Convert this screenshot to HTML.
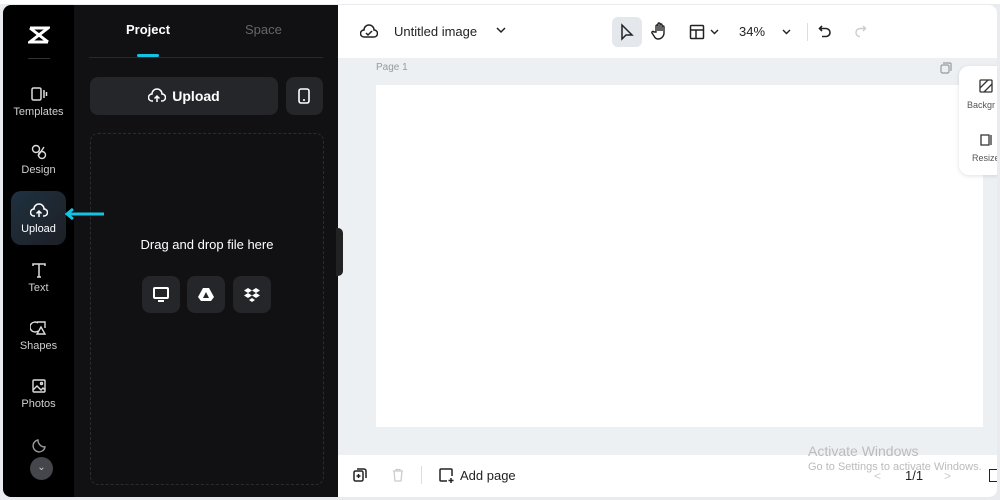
<!DOCTYPE html>
<html><head><style>
*{margin:0;padding:0;box-sizing:border-box}
body{width:1000px;height:500px;background:#e9ebee;font-family:"Liberation Sans",sans-serif;position:relative;overflow:hidden}
.abs{position:absolute}
.side{left:3px;top:5px;width:71px;height:492px;background:#000;border-radius:8px 0 0 8px}
.panel{left:74px;top:5px;width:264px;height:492px;background:#111113}
.nav{position:absolute;left:0;width:71px;text-align:center;color:#d0d0d0;font-size:11px}
.nav svg{display:block;margin:0 auto 3px}
.main{left:338px;top:5px;width:659px;height:492px;background:#fff;border-radius:0 8px 8px 0;overflow:hidden}
.btn{background:#25262a;border-radius:8px}
.chev{font-size:13px;color:#222}
</style></head><body>
<div class="abs" style="left:0;top:0;width:1000px;height:4px;background:#fff"></div>
<div class="abs side">
 <svg class="abs" style="left:25px;top:20px" width="22" height="20" viewBox="0 0 22 20"><path d="M2 3h18L2 17h18M2 3l18 14" stroke="#fff" stroke-width="3" fill="none"/></svg>
 <div class="abs" style="left:25px;top:53px;width:22px;height:1px;background:#333"></div>
 <div class="nav" style="top:80px"><svg width="18" height="18" viewBox="0 0 18 18" fill="none" stroke="#ddd" stroke-width="1.5"><rect x="2" y="3" width="9" height="12" rx="1.5"/><path d="M14 5v8M16.5 7v4"/></svg>Templates</div>
 <div class="nav" style="top:138px"><svg width="18" height="18" viewBox="0 0 18 18" fill="none" stroke="#ddd" stroke-width="1.4"><circle cx="6" cy="6" r="3.5"/><circle cx="12" cy="12" r="3.5"/><path d="M8 13l6-9"/></svg>Design</div>
 <div class="abs" style="left:8px;top:186px;width:55px;height:54px;border-radius:10px;background:linear-gradient(135deg,#1f3140,#1d1f25)"></div>
 <div class="nav" style="top:197px;color:#fff"><svg width="18" height="18" viewBox="0 0 18 18" fill="none" stroke="#fff" stroke-width="1.5"><path d="M5 14H4a3.5 3.5 0 0 1 0-7 5 5 0 0 1 10 0 3.5 3.5 0 0 1 0 7h-1M9 15V9M6.5 11.5 9 9l2.5 2.5"/></svg>Upload</div>
 <div class="nav" style="top:256px"><svg width="18" height="18" viewBox="0 0 18 18" fill="none" stroke="#ddd" stroke-width="1.5"><path d="M3 5V3h12v2M9 3v13M7 16h4"/></svg>Text</div>
 <div class="nav" style="top:314px"><svg width="18" height="18" viewBox="0 0 18 18" fill="none" stroke="#ddd" stroke-width="1.4"><path d="M8 4a5 5 0 1 0 0 8M7 3h8v6M11 8l-4 7h8z"/></svg>Shapes</div>
 <div class="nav" style="top:372px"><svg width="18" height="18" viewBox="0 0 18 18" fill="none" stroke="#ddd" stroke-width="1.4"><rect x="3" y="3" width="12" height="12" rx="1"/><path d="M3 13l4-4 4 4 2-2 2 2"/><circle cx="11.5" cy="6.5" r="1"/></svg>Photos</div>
 <svg class="abs" style="left:27px;top:432px" width="18" height="18" viewBox="0 0 18 18" fill="none" stroke="#999" stroke-width="1.4"><path d="M15 10a6 6 0 1 1-7-7c0 4 3 7 7 7z"/></svg>
 <div class="abs" style="left:27px;top:452px;width:23px;height:23px;border-radius:50%;background:#45464b;color:#ccc;font-size:10px;text-align:center;line-height:22px">&#8964;</div>
</div>
<div class="abs panel">
 <div class="abs" style="left:52px;top:17px;color:#fff;font-weight:bold;font-size:13px">Project</div>
 <div class="abs" style="left:171px;top:17px;color:#666;font-size:13px">Space</div>
 <div class="abs" style="left:63px;top:49px;width:22px;height:3px;background:#13c3e3;border-radius:2px"></div>
 <div class="abs" style="left:15px;top:52px;width:234px;height:1px;background:#2a2a2e"></div>
 <div class="abs btn" style="left:16px;top:72px;width:188px;height:38px;color:#fff;font-size:14px;font-weight:bold;line-height:38px;text-align:center"><svg style="vertical-align:-3px;margin-right:6px" width="18" height="16" viewBox="0 0 18 16" fill="none" stroke="#fff" stroke-width="1.5"><path d="M5 13H4a3.5 3.5 0 0 1 0-7 5 5 0 0 1 10 0 3.5 3.5 0 0 1 0 7h-1M9 14V8M6.5 10.5 9 8l2.5 2.5"/></svg>Upload</div>
 <div class="abs btn" style="left:212px;top:72px;width:37px;height:38px"><svg class="abs" style="left:12px;top:11px" width="12" height="16" fill="none" stroke="#fff" stroke-width="1.6"><rect x="1" y="1" width="10" height="14" rx="2"/><path d="M5 12h2"/></svg></div>
 <div class="abs" style="left:16px;top:128px;width:234px;height:352px;border:1px dashed #2c2c30;border-radius:8px"></div>
 <div class="abs" style="left:16px;top:232px;width:234px;text-align:center;color:#fff;font-size:13px">Drag and drop file here</div>
 <div class="abs btn" style="left:68px;top:271px;width:38px;height:37px"><svg class="abs" style="left:11px;top:11px" width="16" height="15"><rect x="1" y="1" width="14" height="10" rx="1" fill="none" stroke="#fff" stroke-width="2"/><path d="M5 14h6" stroke="#fff" stroke-width="2"/></svg></div>
 <div class="abs btn" style="left:113px;top:271px;width:38px;height:37px"><svg class="abs" style="left:11px;top:11px" width="16" height="14"><path d="M5 1h6l5 9-3 4H3l-3-4z" fill="#fff"/><path d="M8 5l-3 6h6z" fill="#25262a"/></svg></div>
 <div class="abs btn" style="left:159px;top:271px;width:38px;height:37px"><svg class="abs" style="left:11px;top:11px" width="16" height="15" fill="#fff"><path d="M4 1l4 2.5-4 2.5-4-2.5zM12 1l4 2.5-4 2.5-4-2.5zM4 6l4 2.5-4 2.5-4-2.5zM12 6l4 2.5-4 2.5-4-2.5zM8 11l3 2-3 2-3-2z"/></svg></div>
</div>
<svg class="abs" style="left:58px;top:207px" width="48" height="14"><path d="M46 7H9M15 2 9 7l6 5" stroke="#13c3e3" stroke-width="3" fill="none"/></svg>
<div class="abs main">
 <svg class="abs" style="left:22px;top:18px" width="18" height="16" fill="none" stroke="#222" stroke-width="1.5"><path d="M5 14H4a3.5 3.5 0 0 1 0-7 5 5 0 0 1 10 0 3.5 3.5 0 0 1 0 7z"/><path d="M6 10l2 2 4-4"/></svg>
 <div class="abs" style="left:56px;top:19px;font-size:13px;color:#222">Untitled image</div>
 <svg class="abs" style="left:158px;top:22px" width="10" height="7" fill="none" stroke="#222" stroke-width="1.5"><path d="M1 1l4 4 4-4"/></svg>
 <div class="abs" style="left:274px;top:12px;width:30px;height:30px;background:#e4e7eb;border-radius:6px"></div>
 <svg class="abs" style="left:281px;top:18px" width="16" height="18" fill="none" stroke="#222" stroke-width="1.5"><path d="M3 2v14l4-4h6z"/></svg>
 <svg class="abs" style="left:313px;top:17px" width="16" height="18" fill="none" stroke="#222" stroke-width="1.4"><path d="M5 10V4a1 1 0 0 1 2 0v5V2a1 1 0 0 1 2 0v7V3a1 1 0 0 1 2 0v6V5a1 1 0 0 1 2 0v6a6 6 0 0 1-6 6c-2 0-3-1-4-3l-2-3a1 1 0 0 1 2-1z"/></svg>
 <svg class="abs" style="left:351px;top:19px" width="16" height="16" fill="none" stroke="#222" stroke-width="1.5"><rect x="1.5" y="1.5" width="13" height="13" rx="1"/><path d="M1.5 6h13M7 6v8.5"/></svg>
 <svg class="abs" style="left:372px;top:24px" width="9" height="6" fill="none" stroke="#222" stroke-width="1.4"><path d="M1 1l3.5 3.5L8 1"/></svg>
 <div class="abs" style="left:401px;top:19px;font-size:13px;color:#222">34%</div>
 <svg class="abs" style="left:444px;top:24px" width="9" height="6" fill="none" stroke="#222" stroke-width="1.4"><path d="M1 1l3.5 3.5L8 1"/></svg>
 <div class="abs" style="left:469px;top:18px;width:1px;height:18px;background:#ddd"></div>
 <svg class="abs" style="left:480px;top:19px" width="16" height="16" fill="none" stroke="#222" stroke-width="1.6"><path d="M4 2 1.5 4.5 4 7M2 4.5h6a4 4 0 0 1 0 8H4"/></svg>
 <svg class="abs" style="left:514px;top:19px" width="16" height="16" fill="none" stroke="#ccc" stroke-width="1.4"><path d="M11 2l2.5 2.5L11 7M13 4.5H8a4 4 0 0 0 0 8"/></svg>
 <div class="abs" style="left:0;top:53px;width:659px;height:397px;background:#edf0f3"></div>
 <div class="abs" style="left:38px;top:57px;font-size:10px;color:#999">Page 1</div>
 <svg class="abs" style="left:602px;top:57px" width="12" height="12" fill="none" stroke="#999" stroke-width="1.2"><rect x="1" y="3" width="8" height="8" rx="1.5"/><path d="M3 1h7a1 1 0 0 1 1 1v7"/></svg>
 <div class="abs" style="left:38px;top:80px;width:607px;height:342px;background:#fff"></div>
 <div class="abs" style="left:621px;top:61px;width:50px;height:109px;background:#fff;border-radius:10px;box-shadow:0 1px 4px rgba(0,0,0,.12)"></div>
 <svg class="abs" style="left:641px;top:74px" width="14" height="14" fill="none" stroke="#333" stroke-width="1.3"><rect x="1" y="1" width="12" height="12" rx="1"/><path d="M1 9 9 1M5 13l8-8"/></svg>
 <div class="abs" style="left:629px;top:95px;font-size:9px;color:#555">Backgr</div>
 <svg class="abs" style="left:641px;top:127px" width="14" height="14" fill="none" stroke="#333" stroke-width="1.3"><path d="M2 3h8v10H2zM12 3v10"/></svg>
 <div class="abs" style="left:634px;top:148px;font-size:9px;color:#555">Resize</div>
 <svg class="abs" style="left:15px;top:463px" width="14" height="14" fill="none" stroke="#222" stroke-width="1.5"><rect x="1" y="3" width="9" height="10" rx="1.5"/><path d="M4 1h7a2 2 0 0 1 2 2v7M5.5 6v4M3.5 8h4"/></svg>
 <svg class="abs" style="left:53px;top:463px" width="14" height="14" fill="none" stroke="#ccc" stroke-width="1.3"><path d="M2 3h10M5 3V1.5h4V3M3 3l1 10h6l1-10"/></svg>
 <div class="abs" style="left:83px;top:461px;width:1px;height:18px;background:#ddd"></div>
 <svg class="abs" style="left:100px;top:462px" width="16" height="17" fill="none" stroke="#222" stroke-width="1.5"><path d="M9 14H3a1 1 0 0 1-1-1V3a1 1 0 0 1 1-1h10a1 1 0 0 1 1 1v6M13 11v5M10.5 13.5h5"/></svg>
 <div class="abs" style="left:122px;top:463px;font-size:13px;color:#222">Add page</div>
 <div class="abs" style="left:470px;top:438px;font-size:14px;color:#bbb">Activate Windows</div>
 <div class="abs" style="left:470px;top:456px;font-size:11px;color:#bbb">Go to Settings to activate Windows.</div>
 <div class="abs" style="left:536px;top:464px;font-size:12px;color:#ccc">&lt;</div>
 <div class="abs" style="left:567px;top:463px;font-size:13px;color:#222">1/1</div>
 <div class="abs" style="left:606px;top:464px;font-size:12px;color:#ccc">&gt;</div>
 <div class="abs" style="left:651px;top:464px;width:8px;height:13px;border:1.5px solid #222;border-right:none"></div>
</div>
<div class="abs" style="left:336px;top:228px;width:7px;height:48px;background:#222;border-radius:0 5px 5px 0"></div>
</body></html>
